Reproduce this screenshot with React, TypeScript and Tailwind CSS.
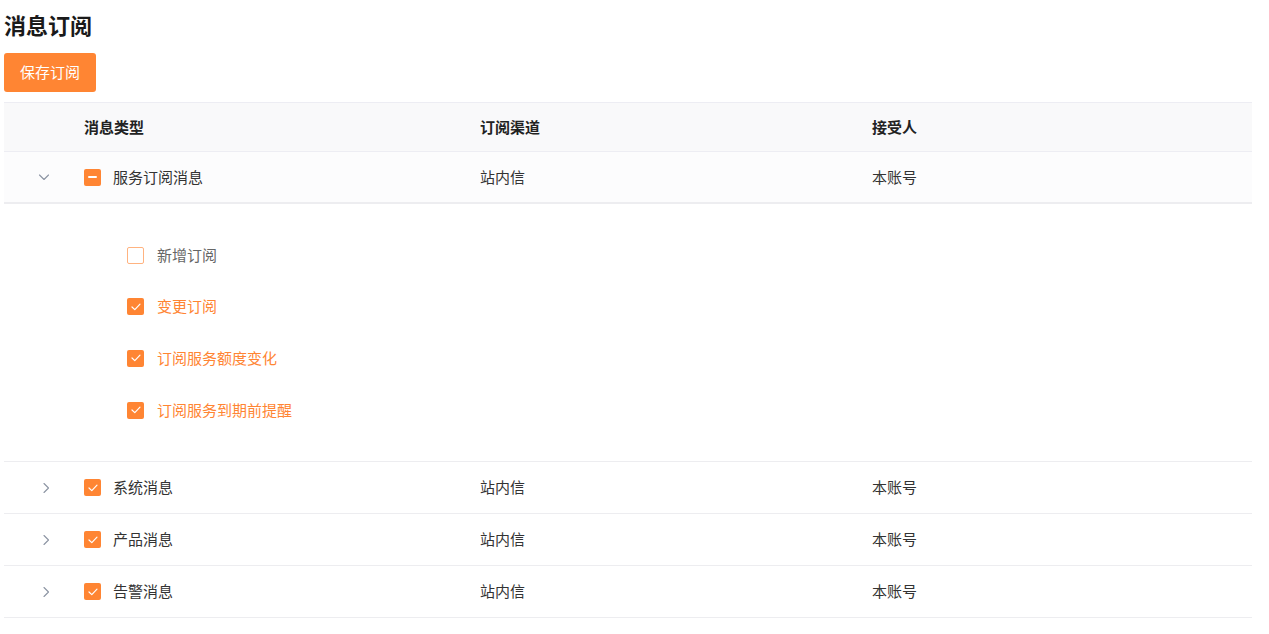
import { useState } from "react";

const ORANGE = "bg-[#ff8533]";

function Check({ state }: { state: "on" | "off" | "half" }) {
  if (state === "off") {
    return <span className="block h-[17px] w-[17px] rounded-[2px] border border-[#ffb380] bg-white" />;
  }
  return (
    <span className={`flex h-[17px] w-[17px] items-center justify-center rounded-[2px] ${ORANGE}`}>
      {state === "half" ? (
        <span className="block h-[2px] w-[9px] rounded bg-white" />
      ) : (
        <svg width="10" height="8" viewBox="0 0 10 8" fill="none">
          <path d="M1 4l2.8 2.6L9 1.2" stroke="white" strokeWidth="1.2" strokeLinecap="round" strokeLinejoin="round" />
        </svg>
      )}
    </span>
  );
}

function Chevron({ open }: { open: boolean }) {
  return (
    <svg width="12" height="12" viewBox="0 0 12 12" fill="none" className="text-[#8c94a3]">
      {open ? (
        <path d="M1.5 4l4.5 4.5L10.5 4" stroke="currentColor" strokeWidth="1.1" strokeLinecap="round" strokeLinejoin="round" />
      ) : (
        <path d="M4 1.5l4.5 4.5L4 10.5" stroke="currentColor" strokeWidth="1.1" strokeLinecap="round" strokeLinejoin="round" />
      )}
    </svg>
  );
}

const subItems = [
  { label: "新增订阅", on: false },
  { label: "变更订阅", on: true },
  { label: "订阅服务额度变化", on: true },
  { label: "订阅服务到期前提醒", on: true },
];

const others = ["系统消息", "产品消息", "告警消息"];

function Row({ name, open, state }: { name: string; open: boolean; state: "on" | "half" }) {
  return (
    <div
      className={`grid h-[52px] grid-cols-[80px_396px_392px_1fr] items-center text-[15px] text-[#333] ${
        open ? "border-b-2 border-[#ededf0] bg-[#fcfcfd]" : "border-b border-[#ededf0] bg-white"
      }`}
    >
      <div className={`flex justify-center ${open ? "pr-0" : "pl-1"}`}>
        <Chevron open={open} />
      </div>
      <div className="flex items-center gap-3">
        <Check state={state} />
        <span>{name}</span>
      </div>
      <div>站内信</div>
      <div>本账号</div>
    </div>
  );
}

export default function App() {
  const [saved] = useState(false);
  return (
    <div className="min-h-screen bg-white px-1 pt-[9px] font-['Noto_Sans_CJK_SC','Noto_Sans',sans-serif]" data-saved={saved}>
      <h1 className="text-[22px] font-bold leading-[30px] text-[#1a1a1a]">消息订阅</h1>
      <button className={`mt-[14px] h-[39px] rounded-[3px] px-4 text-[15px] text-white ${ORANGE}`}>保存订阅</button>
      <div className="mt-[10px] w-[1248px]">
        <div className="grid h-[50px] grid-cols-[80px_396px_392px_1fr] items-center border-y border-[#ededf3] bg-[#f9f9fa] text-[15px] font-bold text-[#222]">
          <div />
          <div>消息类型</div>
          <div>订阅渠道</div>
          <div>接受人</div>
        </div>
        <Row name="服务订阅消息" open state="half" />
        <div className="flex flex-col gap-[33.7px] border-b border-[#ededf0] py-[42px] pl-[123px] text-[15px]">
          {subItems.map((s) => (
            <div key={s.label} className="flex h-[18px] items-center gap-[13px]">
              <Check state={s.on ? "on" : "off"} />
              <span className={s.on ? "text-[#ff8533]" : "text-[#666]"}>{s.label}</span>
            </div>
          ))}
        </div>
        {others.map((n) => (
          <Row key={n} name={n} open={false} state="on" />
        ))}
      </div>
    </div>
  );
}
